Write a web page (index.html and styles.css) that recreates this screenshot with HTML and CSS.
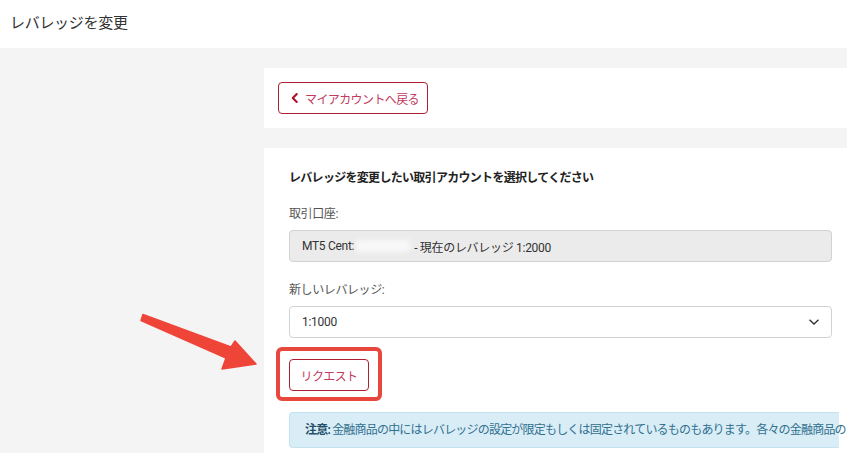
FILE: index.html
```html
<!DOCTYPE html>
<html lang="ja">
<head>
    <meta charset="UTF-8">
    <meta name="viewport" content="width=device-width, initial-scale=1.0">
    <title>レバレッジを変更</title>
    <link rel="stylesheet" href="styles.css">
</head>
<body>
    <div class="header">
        <h1>レバレッジを変更</h1>
    </div>
    <div class="page">
        <div class="sidebar"></div>
        <div class="content">
            <div class="card card-top">
                <a class="btn btn-back" href="#">
                    <svg width="9" height="12" viewBox="0 0 9 12"><path d="M6.5 1.5 L2 6 L6.5 10.5" fill="none" stroke="#a8142c" stroke-width="2.4" stroke-linecap="round" stroke-linejoin="round"/></svg>
                    <span>マイアカウントへ戻る</span>
                </a>
            </div>
            <div class="card card-form">
                <h2>レバレッジを変更したい取引アカウントを選択してください</h2>
                <div class="group">
                    <label>取引口座:</label>
                    <div class="field field-readonly">
                        MT5 Cent:<span class="hidden-num"></span>- 現在のレバレッジ 1:2000
                    </div>
                </div>
                <div class="group">
                    <label>新しいレバレッジ:</label>
                    <div class="field field-select">
                        <span>1:1000</span>
                        <svg width="12" height="8" viewBox="0 0 12 8"><path d="M1.5 1.8 L6 6 L10.5 1.8" fill="none" stroke="#333" stroke-width="1.4"/></svg>
                    </div>
                </div>
                <div class="submit-wrap">
                    <button class="btn btn-request">リクエスト</button>
                    <div class="mark-box"></div>
                </div>
                <div class="alert"><b>注意:</b> 金融商品の中にはレバレッジの設定が限定もしくは固定されているものもあります。各々の金融商品の</div>
            </div>
        </div>
    </div>
    <svg class="annot" width="847" height="453" viewBox="0 0 847 453">
        <polygon points="143,314.5 231,347 235,341 256,364 222,369 226,358 141,320.5" fill="#ef4539" stroke="#ef4539" stroke-width="1.5" stroke-linejoin="round"/>
    </svg>
</body>
</html>
```

FILE: styles.css
```css
html, body {
    margin: 0;
    overflow: hidden;
}
body {
    background: #f4f4f4;
    font-family: "Roboto", "Noto Sans CJK JP", sans-serif;
    color: #333;
    position: relative;
    width: 847px;
    height: 453px;
}
.header {
    background: #fff;
    height: 48px;
    display: flex;
    align-items: center;
    padding-left: 10px;
}
.header h1 {
    margin: 0;
    font-size: 15px;
    font-weight: 400;
    color: #333;
    letter-spacing: -0.3px;
    margin-top: -6px;
}
.page {
    display: flex;
}
.sidebar {
    width: 264px;
    flex-shrink: 0;
}
.content {
    width: 600px;
    flex-shrink: 0;
    padding-top: 20px;
    display: flex;
    flex-direction: column;
    gap: 20px;
}
.card {
    background: #fff;
}
.card-top {
    padding: 14px;
}
.btn {
    display: inline-flex;
    align-items: center;
    box-sizing: border-box;
    height: 32px;
    border: 1px solid #b01e32;
    border-radius: 4px;
    background: #fff;
    color: #c23a5e;
    font-family: inherit;
    font-size: 12px;
    letter-spacing: -0.6px;
    text-decoration: none;
    white-space: nowrap;
}
.btn-back {
    width: 150px;
    padding: 0 8px 0 12px;
    gap: 6px;
}
.card-form {
    padding: 20px 25px 20px;
}
.card-form h2 {
    margin: 0;
    font-size: 12px;
    line-height: 20px;
    font-weight: 700;
    color: #222;
    letter-spacing: -0.7px;
}
.group {
    margin-top: 16px;
    width: 543px;
}
.group + .group {
    margin-top: 18px;
}
.group label {
    display: block;
    font-size: 12px;
    line-height: 20px;
    color: #555;
    letter-spacing: -0.4px;
    margin-bottom: 6px;
}
.field {
    box-sizing: border-box;
    height: 32px;
    border: 1px solid #d2d2d2;
    border-radius: 4px;
    display: flex;
    align-items: center;
    padding: 0 12px;
    font-size: 12px;
    color: #333;
    letter-spacing: -0.3px;
}
.field-readonly {
    background: #ebebeb;
}
.hidden-num {
    display: inline-block;
    width: 54px;
    height: 12px;
    margin: 0 4px 0 2px;
    background: #f8f8f8;
    filter: blur(2.5px);
}
.field-select {
    background: #fff;
    justify-content: space-between;
    padding-right: 11px;
}
.submit-wrap {
    position: relative;
    margin-top: 21px;
    width: 80px;
    height: 32px;
}
.btn-request {
    width: 80px;
    justify-content: center;
    padding: 0;
}
.mark-box {
    position: absolute;
    top: -12px;
    left: -13px;
    right: -13px;
    bottom: -10px;
    border: 4px solid #e8473d;
    border-radius: 6px;
    box-sizing: border-box;
}
.alert {
    margin-top: 21px;
    background: #d9edf7;
    border: 1px solid #c4e3f0;
    border-right: none;
    border-radius: 4px 0 0 4px;
    padding: 8px 0 8px 15px;
    font-size: 12px;
    line-height: 18px;
    color: #31708f;
    letter-spacing: -0.8px;
    white-space: nowrap;
}
.alert b {
    color: #24506a;
}
.annot {
    position: absolute;
    top: 0;
    left: 0;
    pointer-events: none;
}
```
